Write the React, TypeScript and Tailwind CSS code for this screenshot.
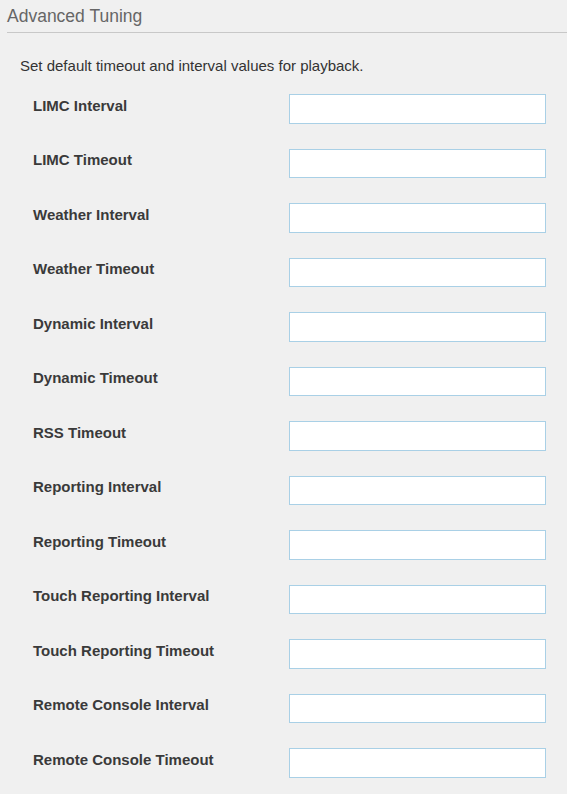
const fields = [
  "LIMC Interval",
  "LIMC Timeout",
  "Weather Interval",
  "Weather Timeout",
  "Dynamic Interval",
  "Dynamic Timeout",
  "RSS Timeout",
  "Reporting Interval",
  "Reporting Timeout",
  "Touch Reporting Interval",
  "Touch Reporting Timeout",
  "Remote Console Interval",
  "Remote Console Timeout",
];

export default function App() {
  return (
    <div className="min-h-[794px] bg-[#f0f0f0] font-['Liberation_Sans',Arial,sans-serif]">
      <div className="pl-[7px] pt-[5px]">
        <h2 className="border-b border-[#c8c8c8] pb-[4px] text-[17.5px] leading-[23px] text-[#666]">
          Advanced Tuning
        </h2>
      </div>

      <p className="mt-[24px] pl-[20px] text-[15px] leading-[18px] text-[#333]">
        Set default timeout and interval values for playback.
      </p>

      <div className="mt-[19px] flex flex-col gap-[25px]">
        {fields.map((label) => (
          <div key={label} className="flex items-start">
            <label className="w-[289px] shrink-0 pl-[33px] pt-[2.5px] text-[15px] font-bold leading-[18px] text-[#3a3a3a]">
              {label}
            </label>
            <input
              type="text"
              className="h-[29.5px] w-[257px] border border-[#a9d0e6] bg-white outline-none"
            />
          </div>
        ))}
      </div>
    </div>
  );
}
